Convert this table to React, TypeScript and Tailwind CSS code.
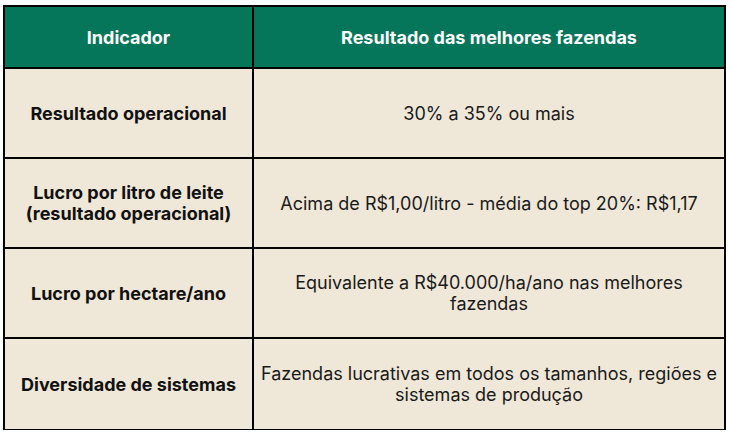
import React from "react";

const rows: [string[], string[]][] = [
  [["Resultado operacional"], ["30% a 35% ou mais"]],
  [["Lucro por litro de leite", "(resultado operacional)"], ["Acima de R$1,00/litro - média do top 20%: R$1,17"]],
  [["Lucro por hectare/ano"], ["Equivalente a R$40.000/ha/ano nas melhores", "fazendas"]],
  [["Diversidade de sistemas"], ["Fazendas lucrativas em todos os tamanhos, regiões e", "sistemas de produção"]],
];

export default function App() {
  return (
    <div className="w-[732px] h-[435px] bg-white pl-[3px] pt-[5px]" style={{ fontFamily: "Inter, 'Noto Sans', sans-serif" }}>
      <div className="w-[723px] border-2 border-black bg-[#efe7d7] border-b-[1.5px]">
        <div className="grid grid-cols-[249px_1fr] h-[62px] bg-[#05765a] border-b-2 border-black">
          <div className="flex items-center justify-center border-r-2 border-black text-white font-bold text-[18px]">Indicador</div>
          <div className="flex items-center justify-center text-white font-bold text-[18px]">Resultado das melhores fazendas</div>
        </div>
        {rows.map(([a, b], i) => (
          <div key={i} className={`grid grid-cols-[249px_1fr] h-[90px] ${i < rows.length - 1 ? "border-b-2 border-black" : ""}`}>
            <div className="flex flex-col items-center justify-center border-r-2 border-black font-bold text-[18px] leading-[21px] text-[#111]">
              {a.map((t, j) => <span key={j}>{t}</span>)}
            </div>
            <div className="flex flex-col items-center justify-center text-[18px] leading-[21px] text-[#1a1a1a]">
              {b.map((t, j) => <span key={j}>{t}</span>)}
            </div>
          </div>
        ))}
      </div>
    </div>
  );
}
